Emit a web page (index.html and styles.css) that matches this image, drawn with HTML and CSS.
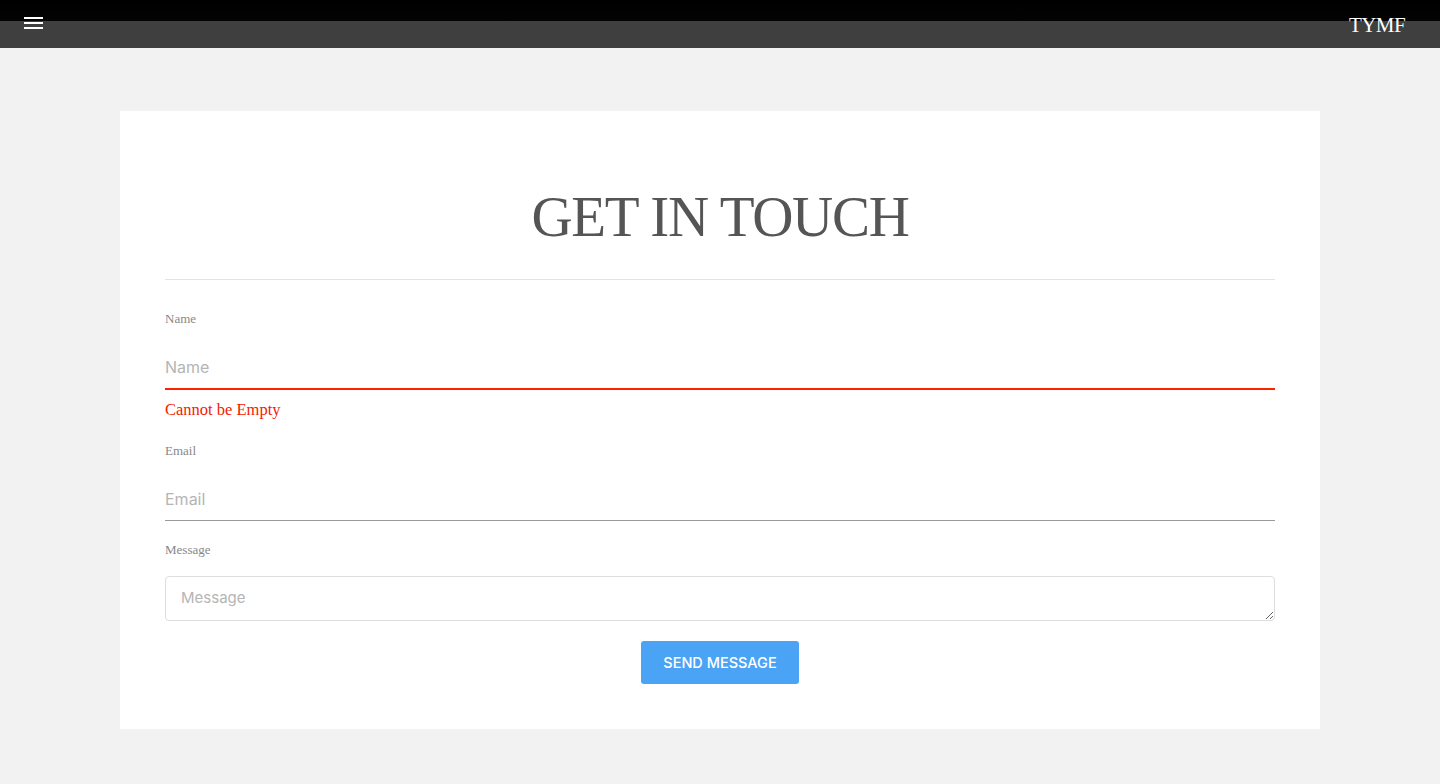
FILE: index.html
```html
<!DOCTYPE html>
<html lang="en">
<head>
<meta charset="utf-8">
<title>Get in touch</title>
<link rel="stylesheet" href="styles.css">
</head>
<body>
<header class="topbar">
  <button class="menu-btn" aria-label="Menu">
    <svg width="19" height="12" viewBox="0 0 19 12" aria-hidden="true">
      <rect x="0" y="0" width="19" height="2" fill="#fff"/>
      <rect x="0" y="5" width="19" height="2" fill="#fff"/>
      <rect x="0" y="10" width="19" height="2" fill="#fff"/>
    </svg>
  </button>
  <div class="brand">TYMF</div>
</header>
<main class="page">
  <section class="card">
    <h1 class="title">GET IN TOUCH</h1>
    <div class="divider"></div>
    <form class="form">
      <div class="field field-name">
        <label class="label" for="name">Name</label>
        <input class="input input-invalid" id="name" type="text" placeholder="Name">
        <div class="error">Cannot be Empty</div>
      </div>
      <div class="field field-email">
        <label class="label" for="email">Email</label>
        <input class="input" id="email" type="email" placeholder="Email">
      </div>
      <div class="field field-message">
        <label class="label" for="message">Message</label>
        <textarea class="textarea" id="message" placeholder="Message"></textarea>
      </div>
      <div class="actions">
        <button type="button" class="send-btn">SEND MESSAGE</button>
      </div>
    </form>
  </section>
</main>
</body>
</html>
```
FILE: styles.css
```css
html, body {
  margin: 0;
  padding: 0;
}
body {
  background: #f2f2f2;
  font-family: "Liberation Serif", "Times New Roman", serif;
  min-height: 784px;
}
.topbar {
  height: 48px;
  background: linear-gradient(to bottom, #000 0, #030303 21px, #3f3f3f 21px, #3f3f3f 48px);
  display: flex;
  justify-content: space-between;
  align-items: flex-start;
  padding: 0 35px 0 24px;
  box-sizing: border-box;
}
.menu-btn {
  margin-top: 17px;
  padding: 0;
  border: 0;
  background: transparent;
  width: 19px;
  height: 12px;
  display: block;
  cursor: pointer;
}
.menu-btn svg {
  display: block;
}
.brand {
  margin-top: 14px;
  color: #fff;
  font-family: "Liberation Serif", serif;
  font-size: 21px;
  line-height: 23px;
  letter-spacing: -0.6px;
}
.page {
  padding-top: 63px;
}
.card {
  width: 1200px;
  margin: 0 auto;
  background: #fff;
  padding: 45px;
  box-sizing: border-box;
}
.title {
  margin: 26px 0 27px;
  text-align: center;
  font-family: "Liberation Serif", serif;
  font-weight: 400;
  font-size: 57px;
  line-height: 70px;
  letter-spacing: -1.3px;
  color: #555;
}
.divider {
  height: 1px;
  background: #e3e3e3;
}
.form {
  display: block;
}
.field-name {
  margin-top: 31px;
}
.field-email {
  margin-top: 23px;
}
.field-message {
  margin-top: 21px;
}
.label {
  display: block;
  font-family: "Liberation Serif", serif;
  font-size: 13px;
  line-height: 16px;
  color: #888;
}
.input {
  display: block;
  width: 100%;
  box-sizing: content-box;
  height: 42px;
  margin-top: 19px;
  padding: 0;
  border: 0;
  border-bottom: 1px solid #9a9a9a;
  background: transparent;
  font-family: Inter, "Liberation Sans", sans-serif;
  font-size: 16px;
  color: #555;
  outline: none;
}
.input-invalid {
  border-bottom: 2px solid #ff2200;
}
.input::placeholder,
.textarea::placeholder {
  color: #b5b5b5;
}
.error {
  margin-top: 10px;
  font-family: "Liberation Serif", serif;
  font-size: 16.5px;
  line-height: 20px;
  color: #f52000;
}
.textarea {
  display: block;
  width: 100%;
  height: 45px;
  box-sizing: border-box;
  margin-top: 18px;
  padding: 10px 15px;
  border: 1px solid #dedede;
  border-radius: 4px;
  font-family: Inter, "Liberation Sans", sans-serif;
  font-size: 15px;
  line-height: 22.5px;
  color: #555;
  outline: none;
}
.actions {
  display: flex;
  justify-content: center;
  margin-top: 20px;
}
.send-btn {
  width: 158px;
  height: 43px;
  border: 0;
  border-radius: 3px;
  background: #4ba3f6;
  color: #fff;
  font-family: Inter, "Liberation Sans", sans-serif;
  font-size: 14.5px;
  font-weight: 500;
  padding: 0;
  cursor: pointer;
}
```
